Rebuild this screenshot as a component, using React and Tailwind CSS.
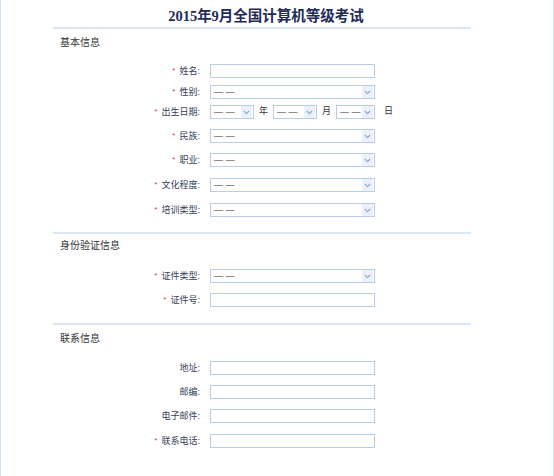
import React from "react";

const FONT = { fontFamily: '"Liberation Sans", "Noto Sans CJK SC", sans-serif' };

function Chevron() {
  return (
    <svg width="7" height="5" viewBox="0 0 7 5" fill="none">
      <path d="M0.8 0.8 L3.5 3.6 L6.2 0.8" stroke="#8aa8d2" strokeWidth="1.2" />
    </svg>
  );
}

function Select({ w }) {
  return (
    <div
      className="flex items-center h-[14px] border border-[#b8cde6] bg-white overflow-hidden"
      style={{ width: w }}
    >
      <span className="flex-1 pl-[3px] text-[9px] leading-none text-[#333] whitespace-nowrap">— —</span>
      <span className="flex items-center justify-center w-[11px] h-[12px] mr-[1px] bg-[#ebf1fa]">
        <Chevron />
      </span>
    </div>
  );
}

function Input() {
  return <div className="w-[165px] h-[14px] border border-[#b8cde6] bg-white" />;
}

function Label({ req, text }) {
  return (
    <div className="w-[199px] flex justify-end items-center text-[9px] leading-none text-[#34405a]">
      {req && <span className="text-[#e5393a] text-[8px] mr-[4px]">*</span>}
      <span>{text}:</span>
    </div>
  );
}

function Row({ req, text, mt, children }) {
  return (
    <div className={`flex items-center h-[14px] ${mt}`}>
      <Label req={req} text={text} />
      <div className="ml-[10px] flex items-center">{children}</div>
    </div>
  );
}

function Line({ mt }) {
  return <div className={`ml-[52px] w-[418px] h-[2px] bg-[#dae8f5] ${mt}`} />;
}

function Heading({ children, mt }) {
  return (
    <div className={`pl-[59px] text-[10px] leading-[14px] h-[14px] text-[#333] ${mt}`}>{children}</div>
  );
}

export default function App() {
  return (
    <div
      className="w-[554px] h-[476px] bg-white border-l border-r border-[#d3e3f1] box-border overflow-hidden"
      style={FONT}
    >
      <div className="h-[27px] flex items-end justify-center pb-[1px] pr-[22px]">
        <div
          className="text-[14.5px] leading-[20px] font-semibold text-[#1e2b57]"
          style={{ fontFamily: '"Liberation Serif", "Noto Sans CJK SC", serif' }}
        >
          2015年9月全国计算机等级考试
        </div>
      </div>
      <Line mt="mt-0" />
      <Heading mt="mt-[7px]">基本信息</Heading>
      <Row req text="姓名" mt="mt-[14px]"><Input /></Row>
      <Row req text="性别" mt="mt-[7px]"><Select w={165} /></Row>
      <Row req text="出生日期" mt="mt-[6px]">
        <Select w={44} />
        <span className="mx-[5px] text-[9px] text-[#333]">年</span>
        <Select w={44} />
        <span className="mx-[5px] text-[9px] text-[#333]">月</span>
        <Select w={39} />
        <span className="ml-[9px] text-[9px] text-[#333]">日</span>
      </Row>
      <Row req text="民族" mt="mt-[10px]"><Select w={165} /></Row>
      <Row req text="职业" mt="mt-[10px]"><Select w={165} /></Row>
      <Row req text="文化程度" mt="mt-[11px]"><Select w={165} /></Row>
      <Row req text="培训类型" mt="mt-[11px]"><Select w={165} /></Row>
      <Line mt="mt-[15px]" />
      <Heading mt="mt-[5px]">身份验证信息</Heading>
      <Row req text="证件类型" mt="mt-[16px]"><Select w={165} /></Row>
      <Row req text="证件号" mt="mt-[10px]"><Input /></Row>
      <Line mt="mt-[16px]" />
      <Heading mt="mt-[7px]">联系信息</Heading>
      <Row text="地址" mt="mt-[15px]"><Input /></Row>
      <Row text="邮编" mt="mt-[10px]"><Input /></Row>
      <Row text="电子邮件" mt="mt-[10px]"><Input /></Row>
      <Row req text="联系电话" mt="mt-[11px]"><Input /></Row>
    </div>
  );
}
